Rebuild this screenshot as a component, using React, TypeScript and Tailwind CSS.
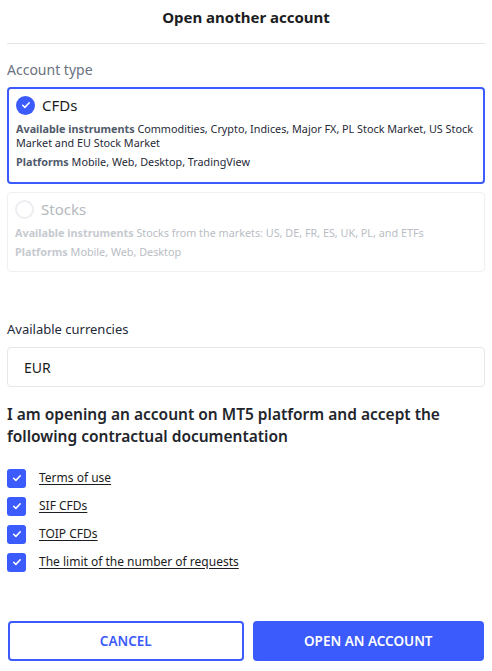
import React from "react";

const Check = ({ className = "" }: { className?: string }) => (
  <svg viewBox="0 0 16 16" className={className} fill="none">
    <path d="M4.2 8.3l2.5 2.4 5-5.2" stroke="white" strokeWidth="1.8" strokeLinecap="round" strokeLinejoin="round" />
  </svg>
);

export default function App() {
  const docs = ["Terms of use", "SIF CFDs", "TOIP CFDs", "The limit of the number of requests"];
  return (
    <div className="w-[492px] h-[671px] bg-white text-[#1b1d22] px-[7px] flex flex-col" style={{ fontFamily: '"Noto Sans", "Open Sans", sans-serif' }}>
      <div className="h-[34px] flex items-center justify-center">
        <h1 className="text-[15px] font-bold leading-[20px]">Open another account</h1>
      </div>
      <div className="mt-[9px] border-t border-[#e3e5e8]" />
      <div className="mt-[16px] text-[14px] leading-[20px] text-[#6b7280]">Account type</div>

      <div className="mt-[7px] border-2 border-[#3b5bfd] rounded-[4px] h-[97px] px-[7px] pt-[6px]">
        <div className="flex items-center gap-[7px]">
          <span className="w-[19px] h-[19px] rounded-full bg-[#3b5bfd] flex items-center justify-center">
            <Check className="w-[14px] h-[14px]" />
          </span>
          <span className="text-[15px] leading-[20px]">CFDs</span>
        </div>
        <p className="mt-[7px] text-[10.8px] leading-[14px] text-[#1f2937]">
          <span className="font-bold text-[#505a6b]">Available instruments</span> Commodities, Crypto, Indices, Major FX, PL Stock Market, US Stock Market and EU Stock Market
        </p>
        <p className="mt-[5px] text-[10.8px] leading-[14px] text-[#1f2937]">
          <span className="font-bold text-[#505a6b]">Platforms</span> Mobile, Web, Desktop, TradingView
        </p>
      </div>

      <div className="mt-[8px] border border-[#eef0f3] rounded-[4px] h-[80px] px-[7px] pt-[6px]">
        <div className="flex items-center gap-[7px]">
          <span className="w-[19px] h-[19px] rounded-full border-2 border-[#eceef2]" />
          <span className="text-[15px] leading-[20px] text-[#b5b9c0]">Stocks</span>
        </div>
        <p className="mt-[6px] text-[10.8px] leading-[15px] text-[#b9bdc4]">
          <span className="font-bold text-[#c6cad0]">Available instruments</span> Stocks from the markets: US, DE, FR, ES, UK, PL, and ETFs
        </p>
        <p className="mt-[4px] text-[10.8px] leading-[15px] text-[#b9bdc4]">
          <span className="font-bold text-[#c6cad0]">Platforms</span> Mobile, Web, Desktop
        </p>
      </div>

      <div className="mt-[48px] text-[13px] leading-[18px] text-[#1f2937]">Available currencies</div>
      <div className="mt-[9px] h-[40px] border border-[#e5e7eb] rounded-[4px] flex items-center px-[16px] text-[14px] text-[#1b1d22]">EUR</div>

      <h2 className="mt-[16px] text-[15.5px] font-semibold leading-[22px] text-[#22252b]">
        I am opening an account on MT5 platform and accept the following contractual documentation
      </h2>

      <div className="mt-[22px] flex flex-col gap-[10px]">
        {docs.map((d) => (
          <div key={d} className="flex items-center gap-[13px] h-[18px]">
            <span className="w-[19px] h-[19px] rounded-[3px] bg-[#3b5bfd] flex items-center justify-center">
              <Check className="w-[14px] h-[14px]" />
            </span>
            <span className="text-[12px] leading-[18px] underline underline-offset-2 text-[#1b1d22]">{d}</span>
          </div>
        ))}
      </div>

      <div className="mt-[50px] flex gap-[9px] px-[1px]">
        <button className="flex-1 h-[40px] border-2 border-[#3b5bfd] rounded-[4px] text-[#3b5bfd] text-[13.5px] font-semibold">CANCEL</button>
        <button className="flex-1 h-[40px] bg-[#3b5bfd] rounded-[4px] text-white text-[13.5px] font-semibold">OPEN AN ACCOUNT</button>
      </div>
    </div>
  );
}
